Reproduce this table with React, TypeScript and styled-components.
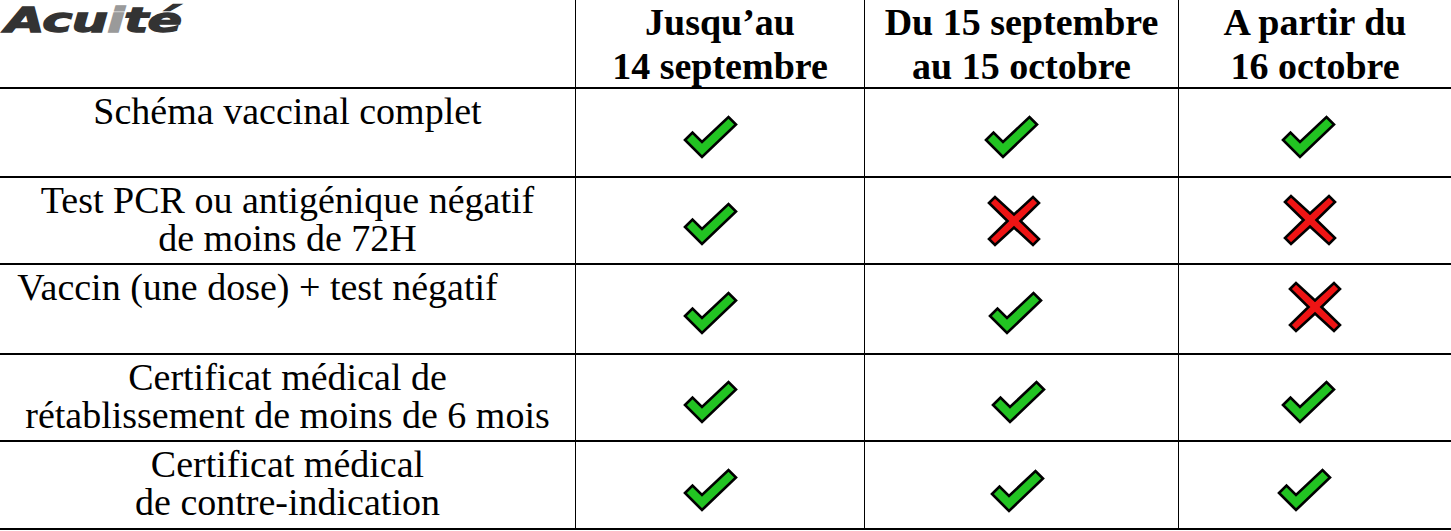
import * as React from 'react';
import styled, { createGlobalStyle } from 'styled-components';

const GlobalStyle = createGlobalStyle`
  html, body {
    margin: 0;
    padding: 0;
    background: #ffffff;
    overflow: hidden;
  }
`;

const Grid = styled.div`
  display: grid;
  grid-template-columns: 575px 289px 314px 273px;
  grid-template-rows: 89px 89px 87px 90px 87px 88px;
  width: 1451px;
  font-family: "Liberation Serif", "Times New Roman", serif;
  color: #000;
`;

const Cell = styled.div<{ $first?: boolean }>`
  border-bottom: 2px solid #000;
  border-left: ${(p) => (p.$first ? 'none' : '1px solid #000')};
  box-sizing: border-box;
  min-width: 0;
`;

const LogoCell = styled(Cell)`
  padding: 0 0 0 5px;
`;

const Logo = styled.div`
  font-family: "DejaVu Sans", sans-serif;
  font-weight: 700;
  font-style: italic;
  font-size: 34px;
  line-height: 40px;
  color: #333333;
  letter-spacing: -0.5px;
  -webkit-text-stroke: 1.3px currentColor;
  transform: scaleX(1.5);
  transform-origin: left top;
  display: inline-block;
`;

const LogoI = styled.span`
  color: #9a9a9a;
`;

const HeadCell = styled(Cell)`
  text-align: center;
  font-weight: 700;
  font-size: 38px;
  line-height: 44px;
  padding-top: 0;
`;

const LabelCell = styled(Cell)<{ $shift?: number }>`
  text-align: center;
  font-size: 38px;
  line-height: 38px;
  padding-top: 3px;
  padding-right: ${(p) => (p.$shift ? `${p.$shift}px` : '0')};
  white-space: nowrap;
`;

const MarkCell = styled(Cell)`
  display: flex;
  align-items: center;
  justify-content: center;
`;

const MarkBox = styled.div<{ $dx: number; $dy: number }>`
  display: flex;
  transform: translate(${(p) => p.$dx}px, ${(p) => p.$dy}px);
`;

const Check = () => (
  <svg width="55" height="44" viewBox="0 0 55 44">
    <polygon
      points="2,25 9.5,17.5 19,27 45.5,2 53,9.5 19,42"
      fill="#22c322"
      stroke="#000"
      strokeWidth="2.6"
      strokeLinejoin="miter"
    />
  </svg>
);

const Cross = () => (
  <svg width="54" height="52" viewBox="0 0 54 52">
    <polygon
      points="2,8 8,2 27,19.5 46,2 52,8 33.5,26 52,44 46,50 27,32.5 8,50 2,44 20.5,26"
      fill="#ee1414"
      stroke="#000"
      strokeWidth="2.6"
      strokeLinejoin="miter"
    />
  </svg>
);

type Mark = { ok: boolean; dx: number; dy: number };

const rows: { label: string[]; shift?: number; marks: Mark[] }[] = [
  {
    label: ['Schéma vaccinal complet'],
    marks: [
      { ok: true, dx: -10, dy: 4 },
      { ok: true, dx: -10, dy: 4 },
      { ok: true, dx: -7, dy: 4 },
    ],
  },
  {
    label: ['Test PCR ou antigénique négatif', 'de moins de 72H'],
    marks: [
      { ok: true, dx: -10, dy: 3 },
      { ok: false, dx: -8, dy: 0 },
      { ok: false, dx: -5, dy: -1 },
    ],
  },
  {
    label: ['Vaccin (une dose) + test négatif'],
    shift: 60,
    marks: [
      { ok: true, dx: -10, dy: 4 },
      { ok: true, dx: -6, dy: 4 },
      { ok: false, dx: 0, dy: -2 },
    ],
  },
  {
    label: ['Certificat médical de', 'rétablissement de moins de 6 mois'],
    marks: [
      { ok: true, dx: -10, dy: 4 },
      { ok: true, dx: -3, dy: 4 },
      { ok: true, dx: -7, dy: 4 },
    ],
  },
  {
    label: ['Certificat médical', 'de contre-indication'],
    marks: [
      { ok: true, dx: -10, dy: 5 },
      { ok: true, dx: -4, dy: 6 },
      { ok: true, dx: -11, dy: 5 },
    ],
  },
];

const heads = [
  ['Jusqu’au', '14 septembre'],
  ['Du 15 septembre', 'au 15 octobre'],
  ['A partir du', '16 octobre'],
];

const App = () => {
  return (
    <>
      <GlobalStyle />
      <Grid>
        <LogoCell $first>
          <Logo>
            Acu<LogoI>i</LogoI>té
          </Logo>
        </LogoCell>
        {heads.map((h, i) => (
          <HeadCell key={i}>
            {h.map((line, j) => (
              <div key={j}>{line}</div>
            ))}
          </HeadCell>
        ))}
        {rows.map((r, i) => (
          <React.Fragment key={i}>
            <LabelCell $first $shift={r.shift}>
              {r.label.map((line, j) => (
                <div key={j}>{line}</div>
              ))}
            </LabelCell>
            {r.marks.map((m, j) => (
              <MarkCell key={j}>
                <MarkBox $dx={m.dx} $dy={m.dy}>
                  {m.ok ? <Check /> : <Cross />}
                </MarkBox>
              </MarkCell>
            ))}
          </React.Fragment>
        ))}
      </Grid>
    </>
  );
};

export default App;
